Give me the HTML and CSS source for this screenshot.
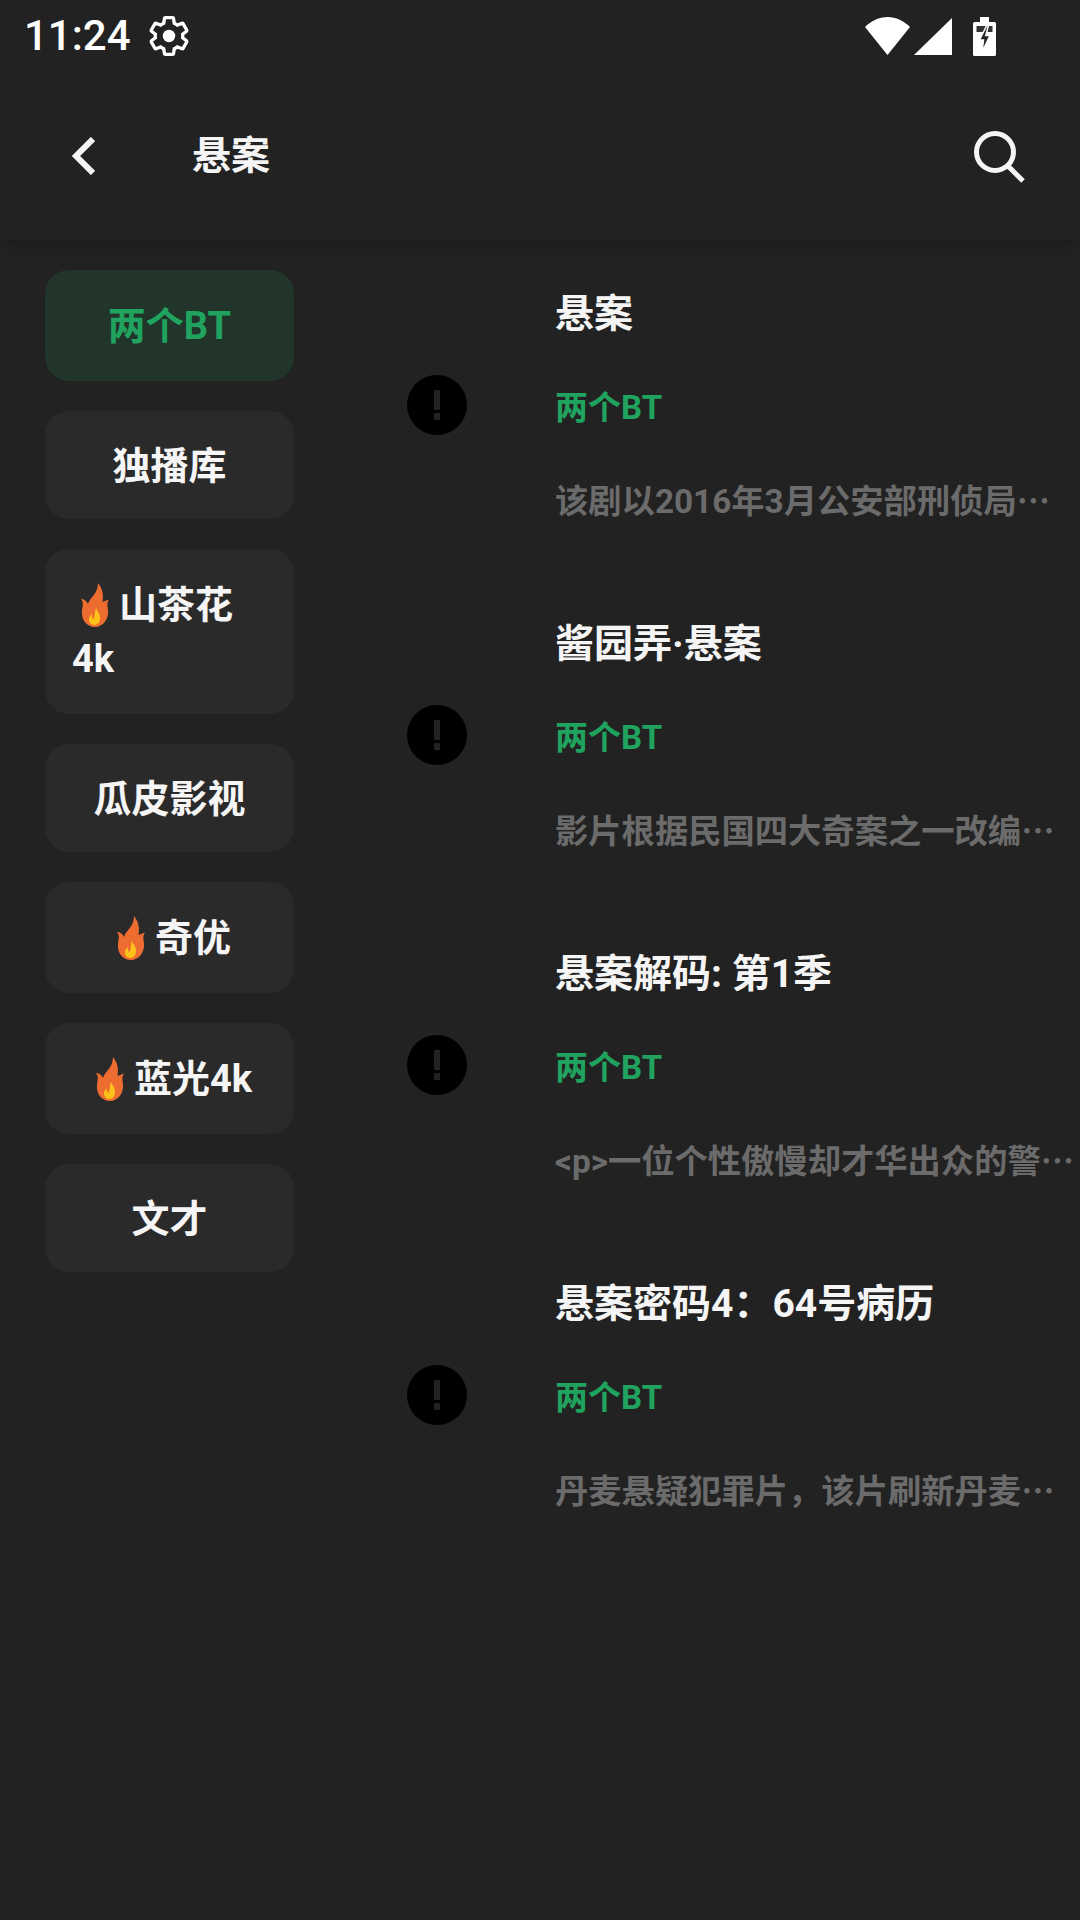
FILE: index.html
```html
<!DOCTYPE html>
<html lang="zh-CN">
<head>
    <meta charset="utf-8">
    <link rel="stylesheet" href="styles.css">
</head>
<body>
    <svg class="defs" width="0" height="0">
        <symbol id="flame" viewBox="0 0 28 44">
            <path fill="#ed6c30" d="M17 0C21 5 23 11 21.500 19C23 18.500 25 17.500 28 16.500C26 19 26 22 27 27C28 36 22 44 14 44C6 44 0 37 1 28C1.500 23 3 20 0 16C3 16 6 18 7 21C9 14 17 11 17 0Z"/>
            <path fill="#fcc21b" d="M15 25C17 29 19 31 19 35C19 39 17 42 13.500 42C10 42 8 39.500 8 36.500C8 34 9.500 32 11 31C10.500 33 11 35 12 36C14 35 13.500 29 15 25Z"/>
        </symbol>
        <symbol id="alert" viewBox="0 0 60 60">
            <circle cx="30" cy="30" r="30" fill="#000"/>
            <rect x="27" y="15" width="6" height="20" fill="#222"/>
            <rect x="27" y="38" width="6" height="7" fill="#222"/>
        </symbol>
    </svg>

    <div class="status-bar">
        <div class="status-left">
            <span class="time">11:24</span>
            <svg class="gear" viewBox="0 0 24 24">
                <path fill="none" stroke="#fff" stroke-width="1.800" d="M19.430 12.980c.04-.32.07-.64.07-.98 0-.34-.03-.66-.07-.98l2.110-1.650c.19-.15.24-.42.12-.64l-2-3.460c-.09-.16-.26-.25-.44-.25-.06 0-.12.01-.17.03l-2.490 1c-.52-.4-1.080-.73-1.690-.98l-.38-2.650C14.460 2.180 14.250 2 14 2h-4c-.25 0-.46.18-.49.42l-.38 2.650c-.61.25-1.170.59-1.690.98l-2.490-1c-.06-.02-.12-.03-.18-.03-.17 0-.34.09-.43.25l-2 3.460c-.13.22-.07.49.12.64l2.110 1.650c-.04.32-.07.65-.07.98 0 .33.03.66.07.98l-2.110 1.650c-.19.15-.24.42-.12.64l2 3.460c.09.16.26.25.44.25.06 0 .12-.01.17-.03l2.490-1c.52.4 1.080.73 1.690.98l.38 2.650c.03.24.24.42.49.42h4c.25 0 .46-.18.49-.42l.38-2.650c.61-.25 1.170-.59 1.690-.98l2.490 1c.06.02.12.03.18.03.17 0 .34-.09.43-.25l2-3.460c.12-.22.07-.49-.12-.64l-2.110-1.650z"/>
                <circle cx="12" cy="12" r="3.400" fill="#fff"/>
            </svg>
        </div>
        <div class="status-right">
            <svg class="wifi" viewBox="0 0 45 38"><path fill="#fff" d="M22.500 38L0 10C6 4 14 0 22.500 0C31 0 39 4 45 10Z"/></svg>
            <svg class="signal" viewBox="0 0 38 37"><path fill="#fff" d="M38 0V37H0Z"/></svg>
            <svg class="battery" viewBox="0 0 23 39">
                <path fill="#fff" d="M7 0H16V5H21.500A1.500 1.500 0 0 1 23 6.500V37.500A1.500 1.500 0 0 1 21.500 39H1.500A1.500 1.500 0 0 1 0 37.500V6.500A1.500 1.500 0 0 1 1.500 5H7Z"/>
                <rect x="3.500" y="9" width="16" height="6" fill="#333"/>
                <path fill="#222" stroke="#fff" stroke-width="1.500" d="M14 8L6.500 23H10.500L9 35L17 18.500H12.800L15.500 8Z"/>
            </svg>
        </div>
    </div>

    <div class="header">
        <svg class="back" viewBox="0 0 24 38"><path fill="none" stroke="#f5f5f5" stroke-width="6" d="M22 2L5 19L22 36"/></svg>
        <h1 class="title">悬案</h1>
        <svg class="search" viewBox="0 0 54 54">
            <circle cx="24" cy="23" r="18.500" fill="none" stroke="#f5f5f5" stroke-width="5"/>
            <path stroke="#f5f5f5" stroke-width="5" d="M37 37L52 52"/>
        </svg>
    </div>

    <div class="content">
        <div class="sidebar">
            <div class="source tall selected">两个BT</div>
            <div class="source">独播库</div>
            <div class="source tall wrap"><svg class="flame"><use href="#flame"/></svg>山茶花<br>4k</div>
            <div class="source">瓜皮影视</div>
            <div class="source tall"><svg class="flame"><use href="#flame"/></svg>奇优</div>
            <div class="source tall"><svg class="flame"><use href="#flame"/></svg>蓝光4k</div>
            <div class="source">文才</div>
        </div>

        <div class="results">
            <div class="result">
                <svg class="alert"><use href="#alert"/></svg>
                <div class="info">
                    <div class="name">悬案</div>
                    <div class="from">两个BT</div>
                    <div class="desc">该剧以2016年3月公安部刑侦局<span class="dots">…</span></div>
                </div>
            </div>
            <div class="result">
                <svg class="alert"><use href="#alert"/></svg>
                <div class="info">
                    <div class="name">酱园弄·悬案</div>
                    <div class="from">两个BT</div>
                    <div class="desc">影片根据民国四大奇案之一改编<span class="dots">…</span></div>
                </div>
            </div>
            <div class="result">
                <svg class="alert"><use href="#alert"/></svg>
                <div class="info">
                    <div class="name">悬案解码: 第1季</div>
                    <div class="from">两个BT</div>
                    <div class="desc">&lt;p&gt;一位个性傲慢却才华出众的警<span class="dots">…</span></div>
                </div>
            </div>
            <div class="result">
                <svg class="alert"><use href="#alert"/></svg>
                <div class="info">
                    <div class="name">悬案密码4：64号病历</div>
                    <div class="from">两个BT</div>
                    <div class="desc">丹麦悬疑犯罪片，该片刷新丹麦<span class="dots">…</span></div>
                </div>
            </div>
        </div>
    </div>
</body>
</html>
```

FILE: styles.css
```css
body {
    width: 1080px;
    height: 1920px;
    margin: 0;
    overflow: hidden;
    background: #222;
    color: #f5f5f5;
    font-family: Roboto, "Noto Sans CJK SC", sans-serif;
}

.defs {
    display: block;
    height: 0;
}

.status-bar {
    display: flex;
    justify-content: space-between;
    align-items: center;
    height: 72px;
    padding: 0 84px 0 24px;
    box-sizing: border-box;
}

.status-left,
.status-right {
    display: flex;
    align-items: center;
}

.time {
    font-size: 42px;
    font-weight: 500;
    line-height: 72px;
    color: #fff;
}

.gear {
    width: 44px;
    height: 44px;
    margin-left: 16px;
}

.wifi {
    width: 45px;
    height: 38px;
}

.signal {
    width: 38px;
    height: 37px;
    margin-left: 4px;
}

.battery {
    width: 23px;
    height: 39px;
    margin-left: 21px;
}

.header {
    position: relative;
    display: flex;
    align-items: center;
    height: 168px;
    padding: 0 55px 0 71px;
    box-sizing: border-box;
    background: #222;
    box-shadow: 0 3px 12px rgba(0, 0, 0, 0.18);
    clip-path: inset(0 0 -24px 0);
}

.back {
    width: 24px;
    height: 38px;
}

.title {
    flex: 1;
    margin: 0 0 0 97px;
    font-size: 39px;
    font-weight: 700;
    line-height: 54px;
}

.search {
    width: 54px;
    height: 54px;
}

.content {
    display: flex;
}

.sidebar {
    display: flex;
    flex-direction: column;
    gap: 30px;
    width: 249px;
    margin: 30px 0 0 45px;
}

.source {
    height: 54px;
    padding: 28px 27px 26px;
    border-radius: 24px;
    background: #2a2a2a;
    font-size: 38px;
    font-weight: 700;
    line-height: 54px;
    text-align: center;
}

.source.tall {
    padding-top: 28.5px;
    padding-bottom: 28.5px;
}

.source.wrap {
    height: 108px;
    text-align: left;
}

.source.selected {
    background: #22352b;
    color: #20a35e;
}

.flame {
    width: 28px;
    height: 44px;
    margin: 0 10px 0 9px;
    vertical-align: -9px;
}

.results {
    display: flex;
    flex-direction: column;
    gap: 51px;
    margin: 26px 0 0 113px;
}

.result {
    display: flex;
    align-items: center;
    gap: 88px;
}

.alert {
    width: 60px;
    height: 60px;
    margin-bottom: 2px;
}

.info {
    white-space: nowrap;
}

.name,
.from,
.desc {
    height: 93px;
    line-height: 93px;
}

.name {
    font-size: 39px;
    font-weight: 700;
    line-height: 97px;
}

.from {
    font-size: 33px;
    font-weight: 700;
    line-height: 97px;
    color: #20a35e;
}

.desc {
    font-size: 33.3px;
    font-weight: 700;
    line-height: 94px;
    color: #6b6b6b;
}

.dots {
    font-family: "Noto Sans CJK SC", sans-serif;
}
```
